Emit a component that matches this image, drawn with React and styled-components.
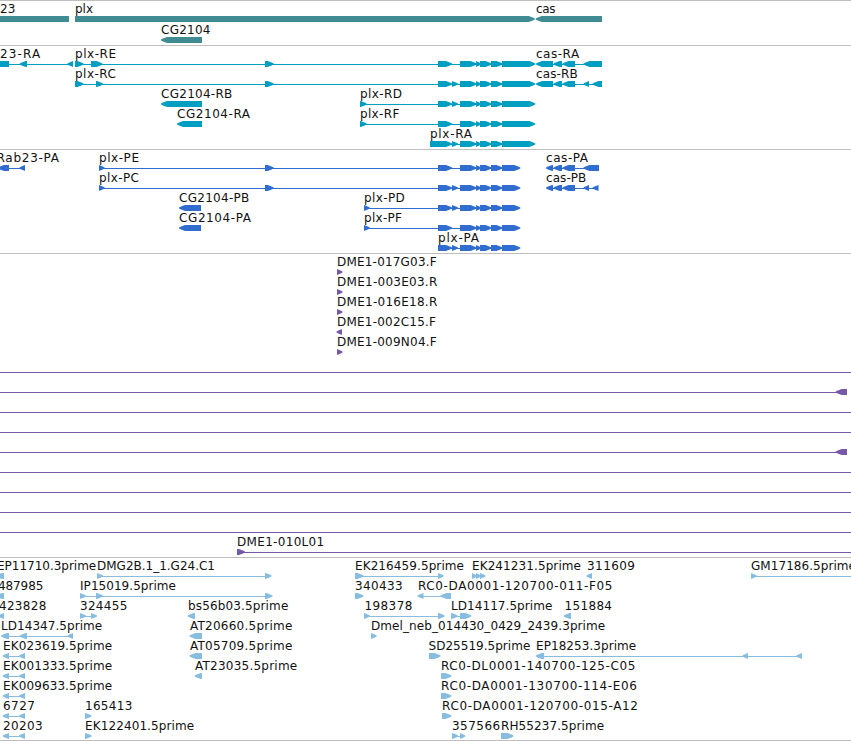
import React from 'react';
import styled, { createGlobalStyle } from 'styled-components';

const GlobalStyle = createGlobalStyle`
  body {
    margin: 0;
    overflow: hidden;
    background-color: #ffffff;
  }
`;

const Browser = styled.main`
  width: 851px;
  height: 740px;
  overflow: hidden;
  display: flex;
  flex-direction: column;
  border-bottom: 1px solid #bebebe;
`;

const Track = styled.section`
  box-sizing: border-box;
  flex: none;
  height: ${({ $height }) => $height}px;
  border-top: 1px solid #bebebe;
  color: ${({ $color }) => $color};
`;

const Lane = styled.svg`
  display: block;
  width: 100%;
  height: ${({ $height }) => $height}px;
  overflow: visible;
`;

const Label = styled.text`
  font-family: 'DejaVu Sans', sans-serif;
  font-size: 12px;
  fill: #111111;
`;

const Intron = styled.rect`
  fill: currentColor;
  shape-rendering: crispEdges;
`;

const Exon = styled.polygon`
  fill: currentColor;
`;

const HEAD = 6;

// outline of an exon, six pixels high, with a rounded head on the strand's side
const outline = (start, end, dir) => {
  if (!dir) {
    return `${start},15 ${end},15 ${end},21 ${start},21`;
  }
  const head = Math.min(HEAD, end - start);
  const tip = dir === 'left' ? start : end;
  const back = dir === 'left' ? end : start;
  const sign = dir === 'left' ? 1 : -1;
  const neck = tip + sign * head;
  const mid = tip + sign * head * 0.35;
  return `${back},15 ${neck},15 ${mid},16.4 ${tip},17.6 ${tip},18.4 ${mid},19.6 ${neck},21 ${back},21`;
};

// f(name, labelStart, labelEnd, direction, exons, line)
const f = (name, x, to, dir, exons, line) => ({ name, x, to, dir, exons, line });

const R = 'right';
const L = 'left';

const tail = [[460, 476.5], [476, 481], [480, 491.5], [491, 502.5]];
const short = [[438, 452], ...tail];
const long = [[438, 452], [452, 458], ...tail];
const rnaEnd = [502, 535.3];
const cdsEnd = [502, 520.3];

const tracks = [
  {
    id: 'gene',
    color: '#408c92',
    height: 45,
    pitch: 21,
    lanes: [
      [
        f('23', 0, 15.5, null, [[0, 69]]),
        f('plx', 75, 93, R, [[75, 534.8]]),
        f('cas', 536, 555.5, L, [[535.7, 602]]),
      ],
      [f('CG2104', 161, 210.5, L, [[161, 202]])],
    ],
  },
  {
    id: 'mrna',
    color: '#009fc1',
    height: 104,
    pitch: 20,
    lanes: [
      [
        f('23-RA', 0, 40.2, L, [[-8, 9], [19.7, 27], [67.5, 73]], [0, 73]),
        f('plx-RE', 75, 116, R, [[75, 83.5], [91, 102.5], [265, 273.7], ...short, rnaEnd], [75, 510]),
        f('cas-RA', 536, 579.2, L, [[536, 553], [553.5, 562], [562.5, 575], [583.5, 602]], [545, 600]),
      ],
      [
        f('plx-RC', 75, 116, R, [[75, 83.5], [96, 103], [265, 273.7], ...long, rnaEnd], [75, 510]),
        f('cas-RB', 536, 577.7, L, [[536, 553], [553.5, 562], [562.5, 575], [583.5, 589], [592.5, 602]], [545, 600]),
      ],
      [
        f('CG2104-RB', 161, 232.3, L, [[161, 202]]),
        f('plx-RD', 360, 402, R, [[360, 366.7], ...long, rnaEnd], [360, 510]),
      ],
      [
        f('CG2104-RA', 177, 250, L, [[177, 202]]),
        f('plx-RF', 360, 399.3, R, [[360, 366.7], ...short, rnaEnd], [360, 510]),
      ],
      [f('plx-RA', 430, 472, R, [[430, 452], [452, 458], ...tail, rnaEnd], [430, 510])],
    ],
  },
  {
    id: 'cds',
    color: '#306dce',
    height: 104,
    pitch: 20,
    lanes: [
      [
        f('Rab23-PA', -3.5, 59, L, [[-2, 9], [19.5, 25]], [2, 25]),
        f('plx-PE', 99, 139, R, [[99, 104.7], [265, 273.7], ...short, cdsEnd], [99, 510]),
        f('cas-PA', 546, 588, L, [[546, 553], [553.5, 562], [562.5, 575], [583.5, 599]], [550, 598]),
      ],
      [
        f('plx-PC', 99, 139, R, [[99, 104.7], [265, 273.7], ...long, cdsEnd], [99, 510]),
        f('cas-PB', 546, 586.3, L, [[546, 553], [553.5, 562], [562.5, 575], [583.5, 589], [592.5, 598.5]], [550, 598]),
      ],
      [
        f('CG2104-PB', 179, 249.3, L, [[179, 201]]),
        f('plx-PD', 364, 404.8, R, [[364, 369.8], ...long, cdsEnd], [364, 510]),
      ],
      [
        f('CG2104-PA', 179, 251, L, [[179, 201]]),
        f('plx-PF', 364, 402, R, [[364, 369.8], ...short, cdsEnd], [364, 510]),
      ],
      [f('plx-PA', 438, 479, R, [...long, cdsEnd], [438, 510])],
    ],
  },
  {
    id: 'bac',
    color: '#7658a9',
    height: 304,
    pitch: 20,
    lanes: [
      [f('DME1-017G03.F', 337, 436.7, R, [[337, 342.5]])],
      [f('DME1-003E03.R', 337, 437.3, R, [[337, 342.5]])],
      [f('DME1-016E18.R', 337, 437.3, R, [[337, 342.5]])],
      [f('DME1-002C15.F', 337, 436, L, [[336.5, 342]])],
      [f('DME1-009N04.F', 337, 436.7, R, [[337, 342.5]])],
      [f('', 0, 0, L, [], [0, 851])],
      [f('', 0, 0, L, [[835.7, 847]], [0, 847])],
      [f('', 0, 0, L, [], [0, 851])],
      [f('', 0, 0, L, [], [0, 851])],
      [f('', 0, 0, L, [[835.7, 847]], [0, 847])],
      [f('', 0, 0, L, [], [0, 851])],
      [f('', 0, 0, L, [], [0, 851])],
      [f('', 0, 0, L, [], [0, 851])],
      [f('', 0, 0, L, [], [0, 851])],
      [f('DME1-010L01', 237, 324.2, R, [[237, 245]], [237, 851])],
    ],
  },
  {
    id: 'est',
    color: '#88bddf',
    height: 183,
    pitch: 20,
    lanes: [
      [
        f('EP11710.3prime', -3, 96.2, L, [[-4, 4]]),
        f('DMG2B.1_1.G24.C1', 97, 215, R, [[97, 103], [265, 271.5]], [97, 269]),
        f('EK216459.5prime', 355, 464, R, [[355, 363.5], [438, 443.7]], [355, 441]),
        f('EK241231.5prime', 472, 581, R, [[472, 477], [476, 481], [480, 485.5]], [472, 482]),
        f('311609', 587, 635, L, [[586.5, 592]]),
        f('GM17186.5prime', 751, 856, R, [[751, 756.7]], [751, 851]),
      ],
      [
        f('487985', -2, 43.3, L, [[-4, 4]]),
        f('IP15019.5prime', 80, 176, R, [[80, 86], [96, 103], [265, 272.5]], [80, 269]),
        f('340433', 355, 402.7, R, [[355, 363.5]]),
        f('RC0-DA0001-120700-011-F05', 418, 612.3, L, [[417.5, 423.5], [440.5, 451]], [420, 449]),
      ],
      [
        f('423828', -1, 46.3, L, [[-2, 4]]),
        f('324455', 80, 127.3, R, [[80, 86], [91, 97]], [80, 94]),
        f('bs56b03.5prime', 188, 288.3, L, [[187.7, 195]]),
        f('198378', 364.5, 412.3, R, [[364, 370], [438, 444.7]], [364, 442]),
        f('LD14117.5prime', 451, 552.3, R, [[451, 457.7], [460, 471.3]], [451, 465]),
        f('151884', 564.5, 612, L, [[563.7, 571]]),
      ],
      [
        f('LD14347.5prime', 1, 102.2, L, [[1, 9], [19.7, 27], [67.5, 73]], [5, 72]),
        f('AT20660.5prime', 190, 292.3, L, [[189.5, 202]]),
        f('Dmel_neb_014430_0429_2439.3prime', 371, 605.2, R, [[371, 376.7]]),
      ],
      [
        f('EK023619.5prime', 3, 112.2, L, [[2.7, 9], [19, 25]], [5, 24]),
        f('AT05709.5prime', 190, 292.3, L, [[189.5, 202]]),
        f('SD25519.5prime', 428.5, 530.3, R, [[429, 440.5]]),
        f('EP18253.3prime', 536, 636.2, L, [[535.7, 544], [742.5, 748], [796.5, 802]], [540, 801]),
      ],
      [
        f('EK001333.5prime', 3, 112.2, L, [[2.7, 9], [19, 25]], [5, 24]),
        f('AT23035.5prime', 195, 297.2, L, [[194.7, 202]]),
        f('RC0-DL0001-140700-125-C05', 441, 635.4, R, [[441, 451.5]]),
      ],
      [
        f('EK009633.5prime', 3, 112.2, L, [[2.7, 9], [19, 25]], [5, 24]),
        f('RC0-DA0001-130700-114-E06', 441, 637, R, [[441, 451.5]]),
      ],
      [
        f('6727', 3, 35, L, [[2.7, 9], [19, 25]], [5, 24]),
        f('165413', 85, 132.3, R, [[85, 91.5]]),
        f('RC0-DA0001-120700-015-A12', 442, 638, R, [[442, 451.5]]),
      ],
      [
        f('20203', 3, 42.7, L, [[2.7, 9], [19, 25]], [5, 24]),
        f('EK122401.5prime', 85, 194.2, R, [[85, 91.5]]),
        f('357566', 452, 500.2, R, [[452, 458.3], [460, 465.3]], [452, 463]),
        f('RH55237.5prime', 501, 604.2, R, [[501, 513.5]]),
      ],
    ],
  },
];

const Feature = ({ name, x, to, dir, exons, line }) => (
  <g>
    {line && <Intron x={line[0]} y={18} width={line[1] - line[0]} height={1} />}
    {exons.map(([start, end]) => (
      <Exon key={start} points={outline(start, end, dir)} />
    ))}
    {name && (
      <Label x={x} y={12} textLength={to - x}>
        {name}
      </Label>
    )}
  </g>
);

const App = () => (
  <>
    <GlobalStyle />
    <Browser>
      {tracks.map(({ id, color, height, pitch, lanes }) => (
        <Track key={id} $color={color} $height={height}>
          {lanes.map((features, n) => (
            <Lane key={n} $height={pitch}>
              {features.map((feature, i) => (
                <Feature key={i} {...feature} />
              ))}
            </Lane>
          ))}
        </Track>
      ))}
    </Browser>
  </>
);

export default App;
